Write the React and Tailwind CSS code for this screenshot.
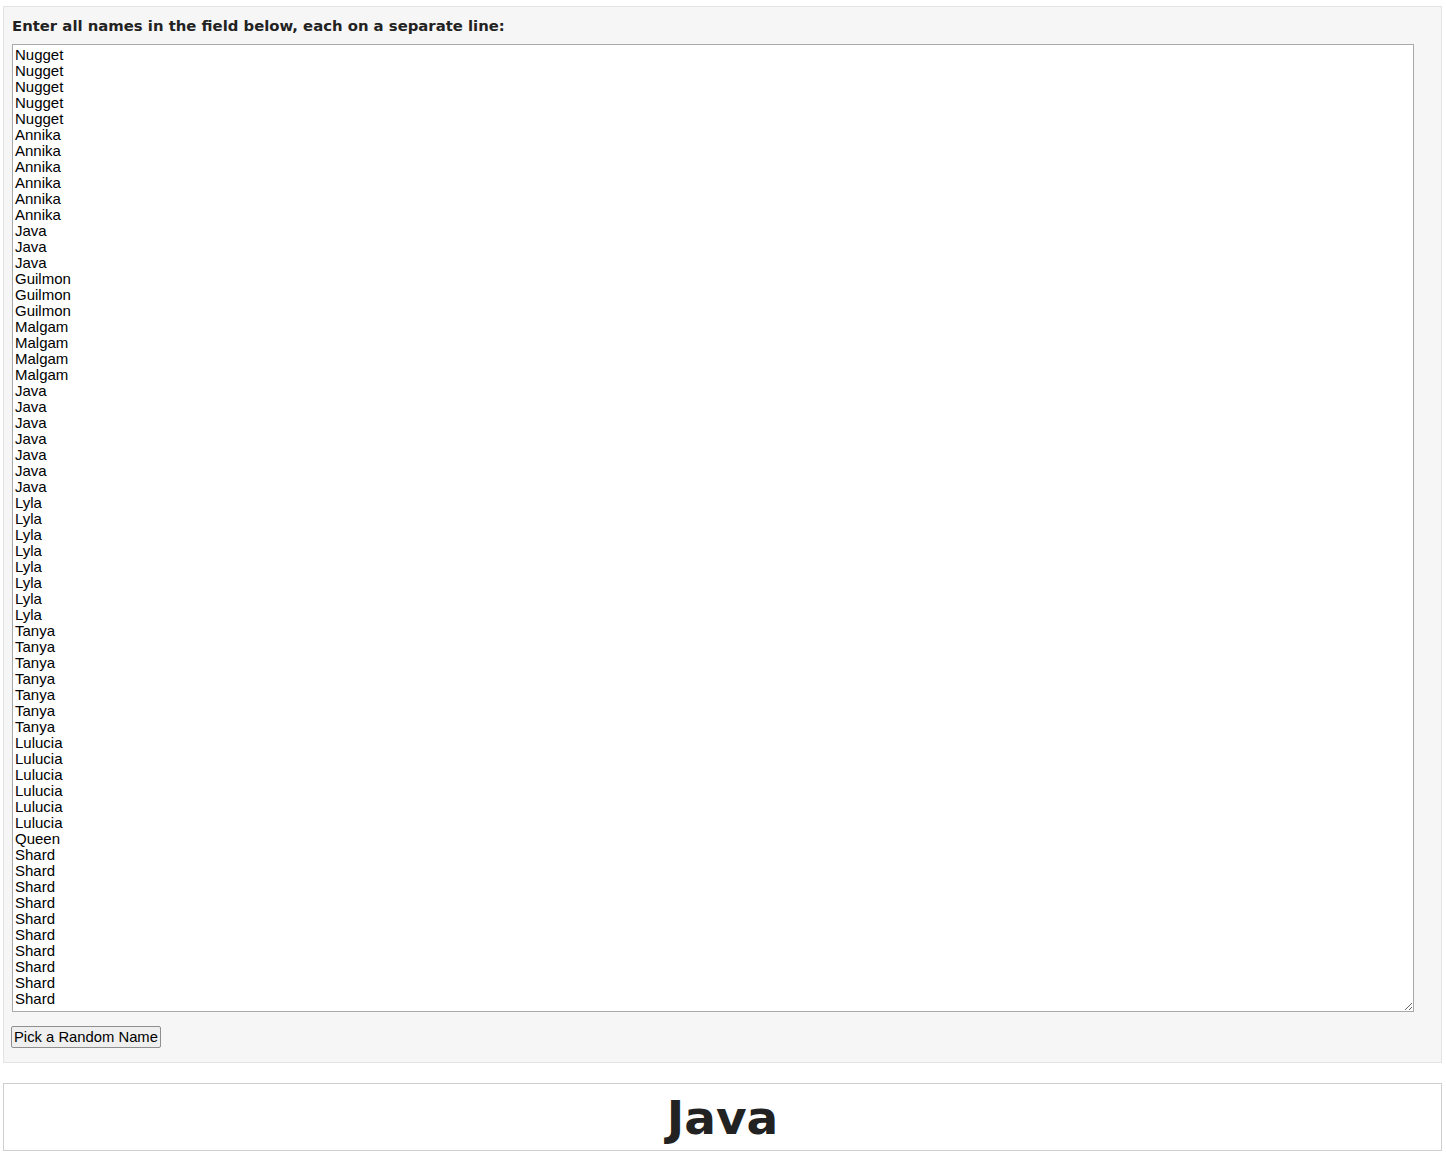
import React from "react";

const names = [
  ...Array(5).fill("Nugget"),
  ...Array(6).fill("Annika"),
  ...Array(3).fill("Java"),
  ...Array(3).fill("Guilmon"),
  ...Array(4).fill("Malgam"),
  ...Array(7).fill("Java"),
  ...Array(8).fill("Lyla"),
  ...Array(7).fill("Tanya"),
  ...Array(6).fill("Lulucia"),
  "Queen",
  ...Array(10).fill("Shard"),
];

export default function App() {
  return (
    <div className="bg-white pt-[6px] pl-[3px] w-[1446px] h-[1153px] overflow-hidden">
      <div className="w-[1439px] h-[1057px] border border-[#e3e3e3] bg-[#f6f6f6] pl-[8px] pt-[10px]">
        <div className="font-['DejaVu_Sans',sans-serif] font-bold text-[14.85px] leading-[18px] text-[#222]">
          Enter all names in the field below, each on a separate line:
        </div>
        <textarea
          className="block mt-[9px] w-[1402px] h-[968px] border border-[#a9a9a9] bg-white px-[2px] py-[2px] font-['Liberation_Sans',Arial,sans-serif] text-[15px] leading-[16px] text-black resize outline-none overflow-hidden"
          defaultValue={names.join("\n")}
          spellCheck={false}
        />
        <button className="block mt-[14px] -ml-[1px] h-[22px] px-[2px] border border-[#8f8f8f] rounded-[2px] bg-[#efefef] font-['Liberation_Sans',Arial,sans-serif] text-[14.8px] leading-[18px] text-black">
          Pick a Random Name
        </button>
      </div>
      <div className="mt-[20px] w-[1439px] h-[68px] border border-[#cfcfcf] bg-white flex items-center justify-center">
        <div className="font-['DejaVu_Sans',sans-serif] font-bold text-[47px] leading-[56px] text-[#222] pt-[1px]">
          Java
        </div>
      </div>
    </div>
  );
}
